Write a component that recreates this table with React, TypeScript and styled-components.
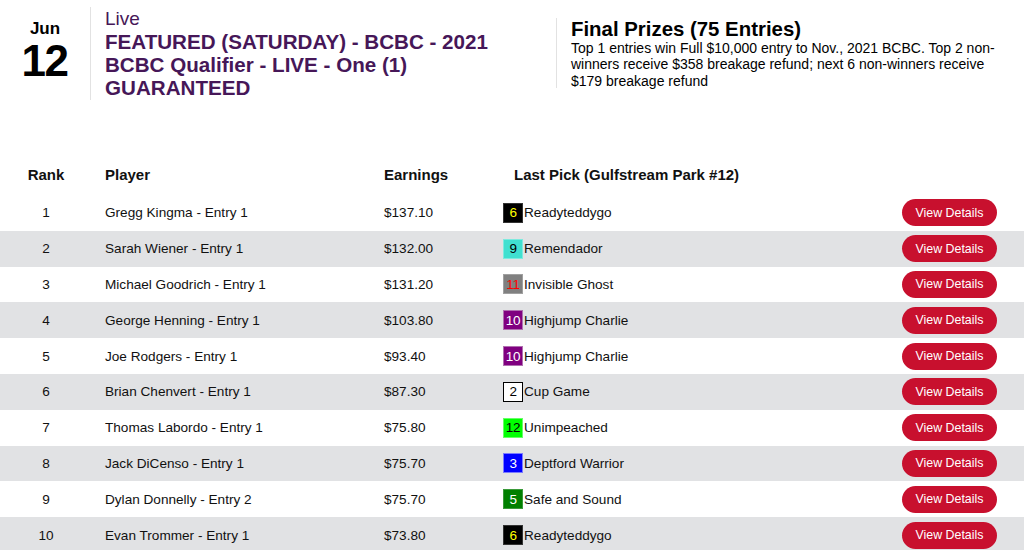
import React from "react";
import styled, { createGlobalStyle } from "styled-components";

const GlobalStyle = createGlobalStyle`
  body {
    margin: 0;
    background: #ffffff;
    font-family: "Liberation Sans", Arial, Helvetica, sans-serif;
    color: #111111;
  }
`;

const PURPLE = "#461758";

const Page = styled.div`
  width: 1024px;
  height: 550px;
  overflow: hidden;
`;

const Header = styled.header`
  display: flex;
  align-items: center;
  padding: 7px 0 0 0;
`;

const DateBox = styled.div`
  width: 91px;
  height: 93px;
  border-right: 1px solid #e2e2e2;
  display: flex;
  flex-direction: column;
  align-items: center;
  justify-content: center;
  gap: 2px;
  font-weight: bold;
  color: #000;
  padding-bottom: 5px;
  box-sizing: border-box;
`;

const Month = styled.div`
  font-size: 17px;
  line-height: 17px;
`;

const Day = styled.div`
  font-size: 44px;
  line-height: 44px;
  letter-spacing: -1.5px;
  margin-left: -1px;
`;

const EventInfo = styled.div`
  width: 418px;
  padding-left: 14px;
  height: 93px;
  color: ${PURPLE};
`;

const Status = styled.div`
  font-size: 19px;
  line-height: 23px;
`;

const EventTitle = styled.h1`
  margin: 0;
  font-size: 20.6px;
  line-height: 23px;
  font-weight: bold;
`;

const Prizes = styled.div`
  margin-left: 33px;
  border-left: 1px solid #e2e2e2;
  padding-left: 14px;
  width: 448px;
  height: 70px;
  margin-top: -1px;
`;

const PrizeTitle = styled.h2`
  margin: 0;
  font-size: 20.4px;
  line-height: 22px;
  font-weight: bold;
  color: #000;
`;

const PrizeText = styled.p`
  margin: 0;
  font-size: 14px;
  line-height: 16.3px;
  color: #000;
`;

const Board = styled.div`
  margin-top: 53px;
`;

const Row = styled.div<{ $shaded?: boolean; $head?: boolean }>`
  display: grid;
  grid-template-columns: 92px 292px 119px 1fr 95px;
  align-items: center;
  height: ${(p) => (p.$head ? "42px" : "35.8px")};
  padding-right: 27px;
  background: ${(p) => (p.$shaded ? "#e1e2e4" : "transparent")};
  font-size: ${(p) => (p.$head ? "15px" : "13.6px")};
  font-weight: ${(p) => (p.$head ? "bold" : "normal")};
  color: #111;
`;

const RankCell = styled.div`
  text-align: center;
`;

const PlayerCell = styled.div`
  padding-left: 13px;
`;

const Cell = styled.div<{ $pad?: number }>`
  padding-left: ${(p) => p.$pad ?? 0}px;
  white-space: nowrap;
`;

const Pick = styled.div`
  display: flex;
  align-items: center;
  gap: 1px;
`;

const Cloth = styled.span<{ $bg: string; $fg: string; $edge: string }>`
  display: inline-flex;
  align-items: center;
  justify-content: center;
  width: 20px;
  height: 20px;
  box-sizing: border-box;
  background: ${(p) => p.$bg};
  color: ${(p) => p.$fg};
  border: 1px solid ${(p) => p.$edge};
  font-size: 13.5px;
  letter-spacing: -0.3px;
`;

const DetailsButton = styled.button`
  width: 95px;
  height: 27px;
  border: none;
  border-radius: 14px;
  background: #c8102e;
  color: #fff;
  font-family: "Liberation Sans", Arial, sans-serif;
  font-size: 12.4px;
  padding: 0;
  cursor: pointer;
`;

const cloths: Record<number, { bg: string; fg: string; edge: string }> = {
  2: { bg: "#ffffff", fg: "#000000", edge: "#000000" },
  3: { bg: "#0000ff", fg: "#ffffff", edge: "#7b7bff" },
  5: { bg: "#008000", fg: "#ffffff", edge: "#3a9a3a" },
  6: { bg: "#000000", fg: "#ffff00", edge: "#333333" },
  9: { bg: "#40e0d0", fg: "#000000", edge: "#7eeadf" },
  10: { bg: "#800080", fg: "#ffffff", edge: "#b070b0" },
  11: { bg: "#808080", fg: "#ff0000", edge: "#a0a0a0" },
  12: { bg: "#00ff00", fg: "#000000", edge: "#66ff66" },
};

const leaders = [
  { player: "Gregg Kingma - Entry 1", earnings: "$137.10", num: 6, horse: "Readyteddygo" },
  { player: "Sarah Wiener - Entry 1", earnings: "$132.00", num: 9, horse: "Remendador" },
  { player: "Michael Goodrich - Entry 1", earnings: "$131.20", num: 11, horse: "Invisible Ghost" },
  { player: "George Henning - Entry 1", earnings: "$103.80", num: 10, horse: "Highjump Charlie" },
  { player: "Joe Rodgers - Entry 1", earnings: "$93.40", num: 10, horse: "Highjump Charlie" },
  { player: "Brian Chenvert - Entry 1", earnings: "$87.30", num: 2, horse: "Cup Game" },
  { player: "Thomas Labordo - Entry 1", earnings: "$75.80", num: 12, horse: "Unimpeached" },
  { player: "Jack DiCenso - Entry 1", earnings: "$75.70", num: 3, horse: "Deptford Warrior" },
  { player: "Dylan Donnelly - Entry 2", earnings: "$75.70", num: 5, horse: "Safe and Sound" },
  { player: "Evan Trommer - Entry 1", earnings: "$73.80", num: 6, horse: "Readyteddygo" },
];

const App: React.FC = () => {
  return (
    <Page>
      <GlobalStyle />
      <Header>
        <DateBox>
          <Month>Jun</Month>
          <Day>12</Day>
        </DateBox>
        <EventInfo>
          <Status>Live</Status>
          <EventTitle>
            FEATURED (SATURDAY) - BCBC - 2021 BCBC Qualifier - LIVE - One (1)
            GUARANTEED
          </EventTitle>
        </EventInfo>
        <Prizes>
          <PrizeTitle>Final Prizes (75 Entries)</PrizeTitle>
          <PrizeText>
            Top 1 entries win Full $10,000 entry to Nov., 2021 BCBC. Top 2
            non-winners receive $358 breakage refund; next 6 non-winners
            receive $179 breakage refund
          </PrizeText>
        </Prizes>
      </Header>

      <Board>
        <Row $head>
          <RankCell>Rank</RankCell>
          <PlayerCell>Player</PlayerCell>
          <Cell>Earnings</Cell>
          <Cell $pad={11}>Last Pick (Gulfstream Park #12)</Cell>
          <div />
        </Row>
        {leaders.map((entry, index) => {
          const c = cloths[entry.num];
          return (
            <Row key={index} $shaded={index % 2 === 1}>
              <RankCell>{index + 1}</RankCell>
              <PlayerCell>{entry.player}</PlayerCell>
              <Cell>{entry.earnings}</Cell>
              <Pick>
                <Cloth $bg={c.bg} $fg={c.fg} $edge={c.edge}>
                  {entry.num}
                </Cloth>
                {entry.horse}
              </Pick>
              <DetailsButton>View Details</DetailsButton>
            </Row>
          );
        })}
      </Board>
    </Page>
  );
};

export default App;
